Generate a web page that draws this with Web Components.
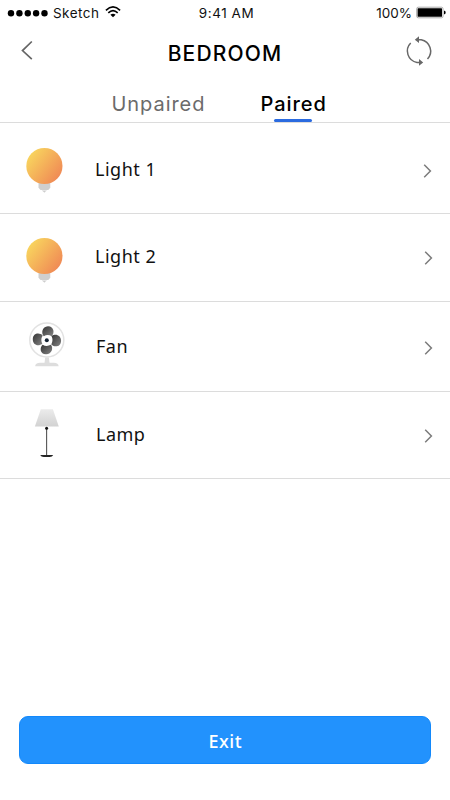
<!DOCTYPE html>
<html lang="en">
<head>
<meta charset="utf-8">
<title>Bedroom</title>
<style>
html,body{margin:0;height:100%;background:#fff;overflow:hidden}
body{font-family:"Noto Sans","Open Sans",sans-serif;color:#0a0a0a}
</style>
</head>
<body>
<room-screen></room-screen>
<script>
const define = (name, html, setup) => customElements.define(name, class extends HTMLElement {
  constructor() {
    super();
    const t = document.createElement('template');
    t.innerHTML = html;
    this.attachShadow({mode: 'open'}).append(t.content.cloneNode(true));
  }
  connectedCallback() { if (setup) setup(this); }
});

define('status-bar', `
<style>
:host{display:grid;grid-template-columns:1fr auto 1fr;height:27px;box-sizing:border-box;padding:0 4px 0 7px;font:400 13.5px/27px Inter,sans-serif;color:#111}
div{display:flex;align-items:center}
.r{justify-content:flex-end}
svg{display:block;flex:none}
.net{margin:0 6px 0 5px;letter-spacing:.45px}
.time{letter-spacing:.55px}
</style>
<div><svg width="41" height="8" viewBox="0 0 41 8"><circle cx="4" cy="3.3" r="3.2"/><circle cx="12.4" cy="3.3" r="3.2"/><circle cx="20.8" cy="3.3" r="3.2"/><circle cx="29.1" cy="3.3" r="3.2"/><circle cx="37.5" cy="3.3" r="3.2"/></svg>
<span class="net">Sketch</span>
<svg style="margin-top:-3px" width="16" height="14" viewBox="0 0 16 14" fill="none" stroke="#000" stroke-width="1.6"><path d="M.9 5.3Q8-1.5 15.1 5.3M3.3 7.9Q8 3.4 12.7 7.9"/><path d="M5.4 9.7Q8 7.6 10.6 9.7L8 12.2z" fill="#000" stroke="none"/></svg></div>
<span class="time">9:41 AM</span>
<div class="r"><span>100%</span><svg style="margin:-2px 0 0 4px" width="30" height="14" viewBox="0 0 30 14"><rect x=".7" y="1.2" width="26.3" height="10.6" rx="1.5" fill="#fff" stroke="#aaa"/><rect x="1.6" y="2.2" width="24.4" height="8.6" rx=".5"/><path d="M28 4.8h.6q1 .2 1 1.7t-1 1.7H28z"/></svg></div>`);

define('nav-bar', `
<style>
:host{display:grid;grid-template-columns:60px 1fr 60px;height:54px;align-items:start}
svg{display:block}
h1{margin:12px 0 0 0;font:500 21px/30px Inter,sans-serif;text-align:center;letter-spacing:1.15px;color:#000}
.back{margin:13px 0 0 20px}
.sync{margin:9px 0 0 14px}
</style>
<svg class="back" width="16" height="22" viewBox="0 0 16 22" fill="none" stroke="#666" stroke-width="1.7"><path d="M11.8 1.5 2.5 10.6 11.8 19.2"/></svg>
<h1><slot></slot></h1>
<svg class="sync" width="30" height="32" viewBox="0 0 30 32"><g fill="none" stroke="#686868" stroke-width="1.5"><path d="M14.6 3.7h2.6A11.7 11.7 0 0 1 23.5 23.1"/><path d="M6.7 7A11.5 11.5 0 0 0 13 26.4h4"/></g><path fill="#686868" d="M10.8 3.7 15 .3v6.8zM19.2 26.4 15 22.9v6.9z"/></svg>`);

define('tab-item', `
<style>
:host{display:block;position:relative;font:400 20px/28px Inter,sans-serif;color:#6b6b6b;letter-spacing:.95px;white-space:nowrap;width:93px}
:host([selected]){color:#000;font-weight:500;letter-spacing:.95px;width:66px}
:host([selected])::after{content:"";position:absolute;left:13.5px;top:28.5px;width:38px;height:3.5px;border-radius:2px;background:#2b6be0}
</style><slot></slot>`);

define('tab-strip', `
<style>:host{display:flex;box-sizing:border-box;height:42px;padding:9px 0 0 111.5px;gap:56px;border-bottom:1px solid #dcdcdc}</style><slot></slot>`);

define('device-icon', `
<style>:host,svg{display:block;width:50px;height:60px}</style>`, el => {
  const art = {
    bulb: `<defs><linearGradient id="a" x1=".1" y1=".2" x2=".9" y2=".82"><stop stop-color="#f8d35e"/><stop offset="1" stop-color="#f08a55"/></linearGradient></defs><path d="M18.5 40h11.8v7.8l-2 2.2h-7.8l-2-2.2z" fill="#cfcfcf"/><path d="M21.7 50.6h5.3l-1.8 1.1-.8 1-.9-1z" fill="#ccc"/><circle cx="24.4" cy="26" r="18.1" fill="url(#a)"/>`,
    fan: `<defs><linearGradient id="b" x1="0" y1="0" x2="1" y2="1"><stop stop-color="#333"/><stop offset="1" stop-color="#858585"/></linearGradient></defs><circle cx="26.8" cy="28" r="17" fill="#fff" stroke="#e2e2e2" stroke-width="1.5"/><path d="M25.2 45.5h3.7l.7 5.4h-5.1z" fill="#dedede"/><path d="M15.2 54.2q0-3.4 5-3.5h13.4q5 .1 5 3.5z" fill="#ddd"/><g fill="url(#b)"><path d="M23.8 24.2c-2.8-3-1.8-9.4 4.2-9.9 6.2.1 6.9 7 3.6 9.9q-3.9-2.3-7.8 0z"/><path d="M22.3 31.7c-4 3.1-9.6 1.2-9.5-4.5.2-6.3 6.6-7 9.9-3.7q-2.4 4-.4 8.2z"/><path d="M31.5 24.1c3.8-3.1 9.6-1.1 9.6 4.6-.1 6.2-6.4 7.1-9.8 3.7q2.3-4.2.2-8.3z"/><path d="M30.9 32.8c2.8 3.2.9 9.6-4.9 9.5-6-.1-6.6-6.6-3.4-9.6q3.9 2.3 8.3.1z"/></g><circle cx="26.8" cy="28.2" r="2" fill="#152333"/>`,
    lamp: `<defs><linearGradient id="c" x1="0" y1="0" x2="0" y2="1"><stop stop-color="#ebebeb"/><stop offset="1" stop-color="#d2d2d2"/></linearGradient></defs><path d="M20.8 5.2h12.1l5.9 17.4H14.9z" fill="url(#c)"/><path d="M26.6 24v28" stroke="#555" stroke-width="1.1"/><circle cx="26.6" cy="24.2" r="1.5" fill="#111"/><path d="M20.2 50.9h13q-1 2-3.5 2.2h-6q-2.5-.2-3.5-2.2z" fill="#252525"/>`
  };
  el.shadowRoot.innerHTML += `<svg viewBox="0 0 50 60">${art[el.getAttribute('name')]}</svg>`;
});

define('device-row', `
<style>
:host{display:grid;grid-template-columns:95px 1fr 30px;box-sizing:border-box;height:var(--h);border-bottom:1px solid #dcdcdc;align-items:start}
device-icon{margin:var(--icon) 0 0 20px}
.label{margin:var(--label) 0 0 var(--indent,0);font-size:18px;line-height:26px;letter-spacing:var(--track,.5px);color:#111}
.go{display:block;margin:var(--go) 0 0 var(--shift,3px)}
</style>
<device-icon></device-icon><span class="label"><slot></slot></span>
<svg class="go" width="11" height="16" viewBox="0 0 11 16" fill="none" stroke="#7b7b7b" stroke-width="1.5"><path d="M1.2 1.7 7.4 8 1.2 14.2"/></svg>`,
 el => {
   const icon = document.createElement('device-icon');
   icon.setAttribute('name', el.getAttribute('icon'));
   el.shadowRoot.querySelector('device-icon').replaceWith(icon);
 });

define('primary-button', `
<style>
:host{display:block}
button{display:flex;align-items:center;justify-content:center;width:100%;height:48px;border:1px solid #1288fb;border-radius:9px;background:#2292fd;color:#fff;font:500 18px/26px "Noto Sans",sans-serif;letter-spacing:.5px;padding:2px 0 0 1px}
</style><button><slot></slot></button>`);

define('room-screen', `
<style>
:host{display:flex;flex-direction:column;width:450px;height:800px;background:#fff}
primary-button{margin:auto 19.5px 36px 19px}
</style>
<status-bar></status-bar>
<nav-bar>BEDROOM</nav-bar>
<tab-strip><tab-item>Unpaired</tab-item><tab-item selected>Paired</tab-item></tab-strip>
<main>
<device-row icon="bulb" style="--h:91px;--icon:17px;--label:33px;--go:40px">Light 1</device-row>
<device-row icon="bulb" style="--h:88px;--icon:16px;--label:29px;--go:36px;--shift:4px">Light 2</device-row>
<device-row icon="fan" style="--h:90px;--icon:10px;--label:31px;--indent:1px;--go:38px;--shift:4px">Fan</device-row>
<device-row icon="lamp" style="--h:87px;--icon:12px;--label:29px;--indent:1px;--go:36px;--shift:4px">Lamp</device-row>
</main>
<primary-button>Exit</primary-button>`);
</script>
</body>
</html>
